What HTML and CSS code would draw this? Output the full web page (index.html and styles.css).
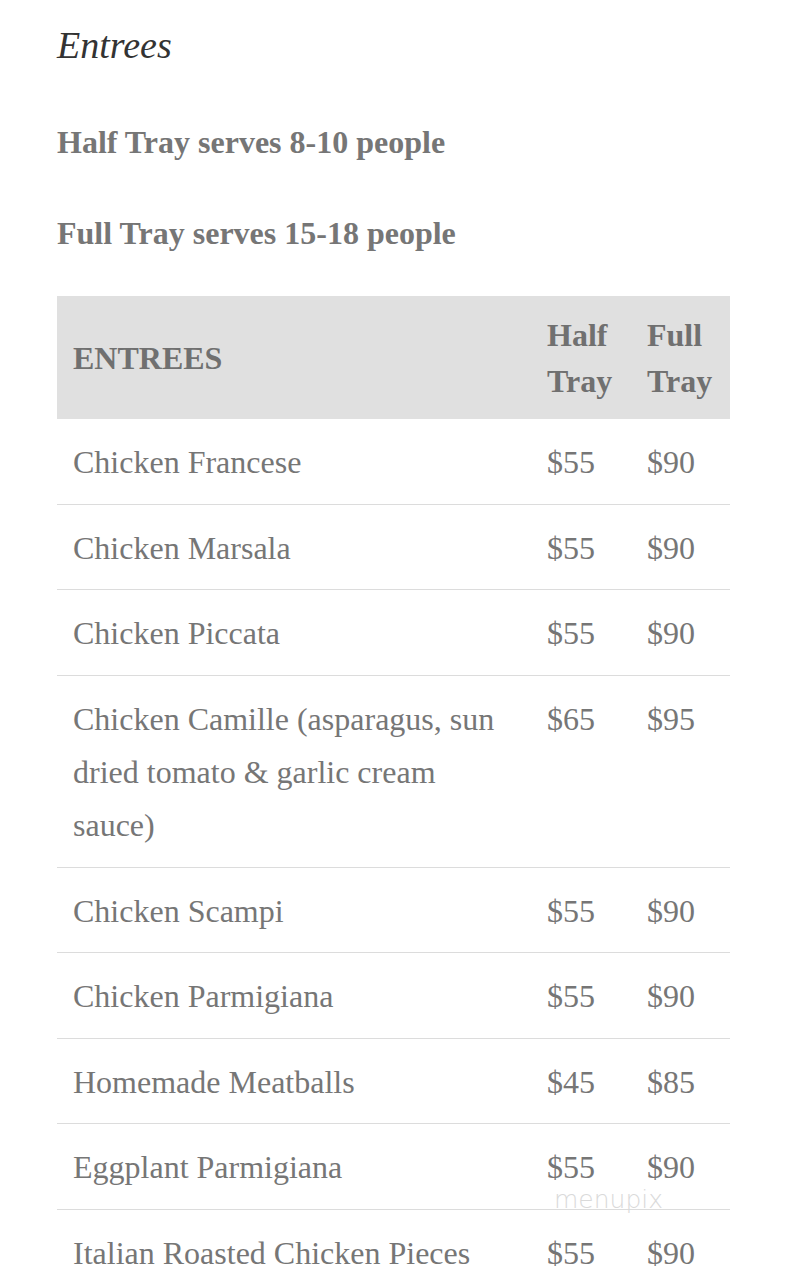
FILE: index.html
```html
<!DOCTYPE html>
<html lang="en">
<head>
<meta charset="utf-8">
<title>Entrees</title>
<link rel="stylesheet" href="styles.css">
</head>
<body>
<main class="page">
  <h1 class="title">Entrees</h1>
  <p class="serves">Half Tray serves 8-10 people</p>
  <p class="serves serves-second">Full Tray serves 15-18 people</p>
  <div class="menu-wrap">
    <table class="menu">
      <thead>
        <tr>
          <th class="col-name">ENTREES</th>
          <th class="col-half">Half Tray</th>
          <th class="col-full">Full Tray</th>
        </tr>
      </thead>
      <tbody>
        <tr><td>Chicken Francese</td><td>$55</td><td>$90</td></tr>
        <tr><td>Chicken Marsala</td><td>$55</td><td>$90</td></tr>
        <tr><td>Chicken Piccata</td><td>$55</td><td>$90</td></tr>
        <tr><td>Chicken Camille (asparagus, sun dried tomato &amp; garlic cream sauce)</td><td>$65</td><td>$95</td></tr>
        <tr><td>Chicken Scampi</td><td>$55</td><td>$90</td></tr>
        <tr><td>Chicken Parmigiana</td><td>$55</td><td>$90</td></tr>
        <tr><td>Homemade Meatballs</td><td>$45</td><td>$85</td></tr>
        <tr><td>Eggplant Parmigiana</td><td>$55</td><td>$90</td></tr>
        <tr><td>Italian Roasted Chicken Pieces</td><td>$55</td><td>$90</td></tr>
      </tbody>
    </table>
    <span class="watermark">menupix</span>
  </div>
</main>
</body>
</html>
```

FILE: styles.css
```css
html, body {
  margin: 0;
  padding: 0;
  background: #ffffff;
}

.page {
  padding: 20px 57px 0 57px;
  font-family: "Liberation Serif", "Times New Roman", serif;
  color: #737373;
  overflow: hidden;
  height: 1287px;
  box-sizing: border-box;
}

.title {
  margin: 0;
  font-family: "Liberation Serif", serif;
  font-style: italic;
  font-weight: normal;
  font-size: 38px;
  line-height: 50px;
  color: #333333;
}

.serves {
  margin: 52px 0 0 0;
  font-weight: bold;
  font-size: 32px;
  line-height: 40px;
  color: #767676;
}

.serves-second {
  margin-top: 51px;
}

.menu-wrap {
  position: relative;
  margin-top: 43px;
}

.menu {
  width: 100%;
  border-collapse: collapse;
  font-size: 32px;
}

.menu thead tr {
  background: #e0e0e0;
}

.menu th {
  text-align: left;
  font-weight: bold;
  line-height: 46px;
  padding: 15.5px 16px;
  color: #707070;
  vertical-align: middle;
}

.menu th.col-name {
  width: 442px;
}

.menu th.col-half {
  width: 68px;
}

.menu td {
  line-height: 53.25px;
  padding: 17.25px 16px 14px 16px;
  border-bottom: 1px solid #dcdcdc;
  vertical-align: top;
  color: #767676;
}

.watermark {
  position: absolute;
  left: 497px;
  top: 890px;
  font-family: "DejaVu Sans", sans-serif;
  font-weight: 200;
  font-size: 25px;
  line-height: 28px;
  color: #dadada;
}
```
